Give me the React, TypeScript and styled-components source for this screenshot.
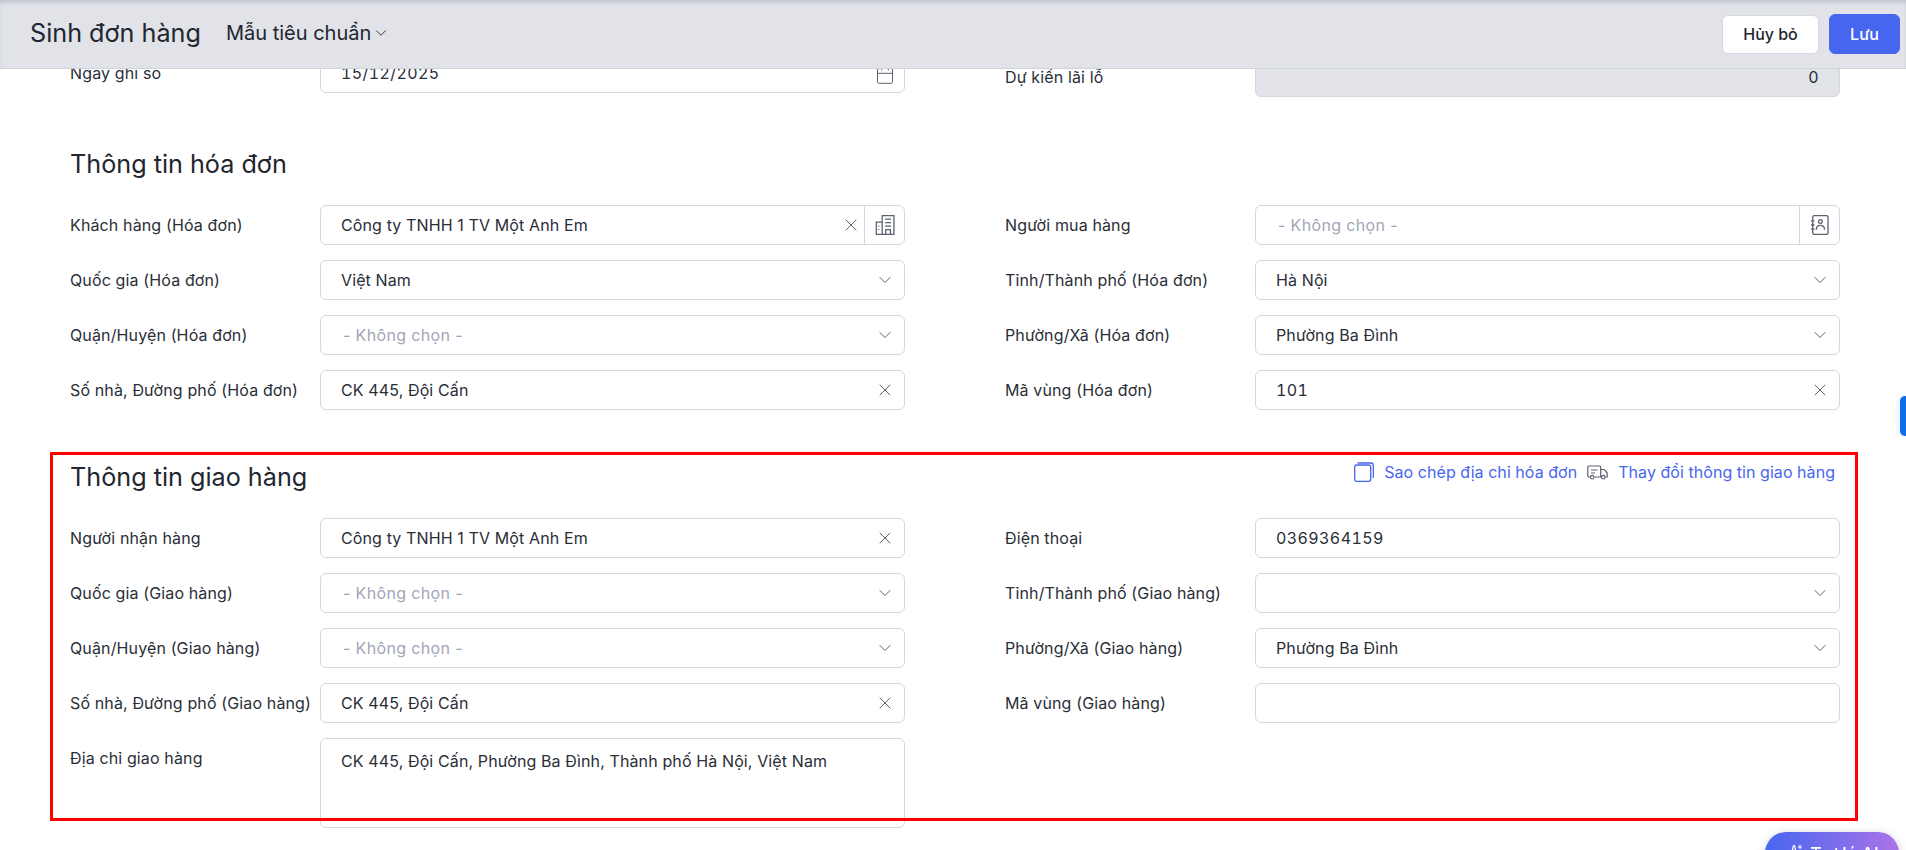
import React from 'react';
import styled, { createGlobalStyle } from 'styled-components';
import { ChevronDown, X, Calendar, Sparkles } from 'lucide-react';

const GlobalStyle = createGlobalStyle`
  html, body {
    margin: 0;
    height: 100%;
    overflow: hidden;
    background: #fff;
    font-family: Inter, "Noto Sans", sans-serif;
    color: #2a2e37;
  }
  * { box-sizing: border-box; }
`;

const BuildingIcon = () => (
  <svg width="20" height="20" viewBox="1.8 2 16.200 17" fill="none" stroke="currentColor" strokeWidth="1.1">
    <path d="M7.5 18.5V2.5h10v16z" />
    <path d="M7.5 8H2.5v10.5h5" />
    <path d="M10 5.500h5M10 8.500h5M10 11.500h5M10.500 18.500v-4h4v4M4.500 11v.8M4.500 14v.8" />
  </svg>
);

const ContactIcon = () => (
  <svg width="19" height="20" viewBox="2 1.500 15.500 17" fill="none" stroke="currentColor" strokeWidth="1.100">
    <rect x="4" y="2" width="13" height="16" rx="1.500" />
    <path d="M2.500 6.500h3M2.500 10h3M2.500 13.500h3" />
    <circle cx="10.500" cy="7" r="1.600" />
    <path d="M7 14c0-2.400 1.500-3.600 3.500-3.600S14 11.600 14 14" />
  </svg>
);

const CopyIcon = () => (
  <svg width="20" height="20" viewBox="0 0 20 20" fill="none" stroke="currentColor" strokeWidth="1.300">
    <rect x="0.700" y="3" width="16" height="16.300" rx="2" />
    <path d="M3.500 1h13.500a2.300 2.300 0 0 1 2.300 2.300V16" />
  </svg>
);

const TruckIcon = () => (
  <svg width="21" height="20" viewBox="0 0 21 20" fill="none" stroke="#5c6270" strokeWidth="1.200">
    <path d="M3 15H2a1.200 1.200 0 0 1-1.200-1.200V5.200A1.200 1.200 0 0 1 2 4h10.500a1.200 1.200 0 0 1 1.200 1.200V15H7.500" />
    <path d="M13.700 7.500h3.500l3 3.500v4h-1.700M14 15h.5" />
    <circle cx="5.200" cy="15.200" r="1.800" />
    <circle cx="16.300" cy="15.200" r="1.800" />
    <path d="M4 8h6.500M4 11h4" />
  </svg>
);

const Header = styled.header`
  position: fixed;
  top: 0;
  left: 0;
  right: 0;
  z-index: 10;
  height: 69px;
  display: flex;
  align-items: center;
  padding: 0 6px 0 30px;
  background: #e1e3e9;
  border-bottom: 1px solid #ced2da;
  box-shadow: inset 0 4px 4px -2px rgba(60, 64, 80, 0.22);
`;

const PageTitle = styled.h1`
  margin: 0 25px 2px 0;
  font-size: 25.200px;
  line-height: 30px;
  font-weight: 400;
  color: #22262e;
`;

const TemplatePicker = styled.div`
  display: flex;
  align-items: center;
  gap: 1px;
  font-size: 20px;
  color: #22262e;
  margin: 0 auto 2px 0;
`;

const HeaderButton = styled.button<{ $primary?: boolean }>`
  height: ${({ $primary }) => ($primary ? 40 : 39)}px;
  width: ${({ $primary }) => ($primary ? 71 : 97)}px;
  margin-left: ${({ $primary }) => ($primary ? 10 : 0)}px;
  border-radius: 6px;
  border: 1px solid ${({ $primary }) => ($primary ? '#4766f0' : '#d6d9e0')};
  background: ${({ $primary }) => ($primary ? '#4766f0' : '#fff')};
  color: ${({ $primary }) => ($primary ? '#fff' : '#22262e')};
  font-family: inherit;
  font-size: 16px;
  font-weight: 500;
`;

const Content = styled.main`
  padding: 53px 66px 0 70px;
`;

const FormGrid = styled.div`
  display: grid;
  grid-template-columns: 835px 835px;
  column-gap: 100px;
  row-gap: 15px;
`;

const Section = styled.section`
  margin-top: 52px;
`;

const SectionHead = styled.div`
  display: flex;
  justify-content: space-between;
  align-items: flex-start;
  margin-bottom: 26px;
`;

const SectionTitle = styled.h2`
  margin: 0;
  font-size: 25.200px;
  line-height: 30px;
  font-weight: 400;
  color: #22262e;
`;

const Actions = styled.div`
  display: flex;
  align-items: center;
  padding-right: 5px;
  color: #4766f0;
  font-size: 16px;
  line-height: 20px;
  letter-spacing: 0.05px;
`;

const ActionLink = styled.a`
  display: flex;
  align-items: center;
  gap: 10px;
  margin-left: 10px;
`;

const Field = styled.div<{ $offset?: number }>`
  display: flex;
  align-items: flex-start;
  margin-top: ${({ $offset }) => $offset ?? 0}px;
`;

const Label = styled.label`
  flex: 0 0 250px;
  font-size: 16px;
  line-height: 40px;
  letter-spacing: 0.13px;
  color: #2a2e37;
`;

const Control = styled.div<{ $disabled?: boolean; $tall?: boolean }>`
  flex: 1;
  height: ${({ $tall }) => ($tall ? 90 : 40)}px;
  display: flex;
  align-items: ${({ $tall }) => ($tall ? 'flex-start' : 'center')};
  border: 1px solid #d3d7df;
  border-radius: 6px;
  background: ${({ $disabled }) => ($disabled ? '#e1e3e9' : '#fff')};
  font-size: 16px;
  color: #2a2e37;
`;

const Value = styled.div<{ $right?: boolean; $tall?: boolean; $numeric?: boolean }>`
  flex: 1;
  padding: ${({ $tall }) => ($tall ? '11px 20px 0' : '0 20px')};
  line-height: 22px;
  text-align: ${({ $right }) => ($right ? 'right' : 'left')};
  letter-spacing: ${({ $numeric }) => ($numeric ? 0.4 : 0.12)}px;
  font-variant-numeric: ${({ $numeric }) => ($numeric ? 'tabular-nums' : 'normal')};
`;

const Placeholder = styled.div`
  flex: 1;
  padding-left: 22px;
  letter-spacing: 0.35px;
  color: #a1a6b6;
`;

const IconSlot = styled.span<{ $tight?: boolean; $nudge?: number }>`
  flex: 0 0 auto;
  display: flex;
  margin-top: ${({ $nudge }) => $nudge ?? 0}px;
  margin-right: ${({ $tight }) => ($tight ? 3 : 9)}px;
  color: #5c6270;
`;

const Addon = styled.span`
  flex: 0 0 40px;
  align-self: stretch;
  display: flex;
  align-items: center;
  justify-content: center;
  border-left: 1px solid #d3d7df;
  color: #5c6270;
`;

const Marker = styled.div`
  position: fixed;
  left: 50px;
  top: 452px;
  width: 1808px;
  height: 369px;
  border: 3px solid #fe0000;
  pointer-events: none;
  z-index: 5;
`;

const SideTab = styled.div`
  position: fixed;
  right: 0;
  top: 396px;
  width: 6px;
  height: 40px;
  border-radius: 5px 0 0 5px;
  background: #0f6fe8;
  box-shadow: 0 0 6px rgba(15, 111, 232, 0.2);
`;

const AssistantButton = styled.button`
  position: fixed;
  right: 7px;
  top: 832px;
  width: 134px;
  height: 42px;
  display: flex;
  align-items: center;
  justify-content: center;
  gap: 7px;
  border: 0;
  border-radius: 21px;
  background: linear-gradient(90deg, #4766f0, #ab74e8);
  color: #fff;
  font-family: inherit;
  font-size: 17.500px;
  font-weight: 500;
  box-shadow: 0 2px 10px rgba(60, 60, 120, 0.25);
`;

const Clear: React.FC<{ tight?: boolean }> = ({ tight }) => (
  <IconSlot $tight={tight}>
    <X size={20} strokeWidth={1.2} />
  </IconSlot>
);

const Caret = () => (
  <IconSlot>
    <ChevronDown size={20} strokeWidth={1.2} />
  </IconSlot>
);

type RowProps = {
  label: string;
  value?: string;
  placeholder?: boolean;
  numeric?: boolean;
  icon?: 'clear' | 'caret' | 'none';
};

const Row: React.FC<RowProps> = ({ label, value, placeholder, numeric, icon = 'caret' }) => (
  <Field>
    <Label>{label}</Label>
    <Control>
      {placeholder ? (
        <Placeholder>- Không chọn -</Placeholder>
      ) : (
        <Value $numeric={numeric}>{value}</Value>
      )}
      {icon === 'clear' && <Clear />}
      {icon === 'caret' && <Caret />}
    </Control>
  </Field>
);

export default function App() {
  return (
    <>
      <GlobalStyle />
      <Header>
        <PageTitle>Sinh đơn hàng</PageTitle>
        <TemplatePicker>
          Mẫu tiêu chuẩn
          <ChevronDown size={18} strokeWidth={1.2} />
        </TemplatePicker>
        <HeaderButton>Hủy bỏ</HeaderButton>
        <HeaderButton $primary>Lưu</HeaderButton>
      </Header>

      <Content>
        <FormGrid>
          <Field>
            <Label>Ngày ghi sổ</Label>
            <Control>
              <Value $numeric>15/12/2025</Value>
              <IconSlot $nudge={4}>
                <Calendar size={20} strokeWidth={1.2} />
              </IconSlot>
            </Control>
          </Field>
          <Field $offset={4}>
            <Label>Dự kiến lãi lỗ</Label>
            <Control $disabled>
              <Value $right $numeric>0</Value>
            </Control>
          </Field>
        </FormGrid>

        <Section>
          <SectionHead>
            <SectionTitle>Thông tin hóa đơn</SectionTitle>
          </SectionHead>
          <FormGrid>
            <Field>
              <Label>Khách hàng (Hóa đơn)</Label>
              <Control>
                <Value>Công ty TNHH 1 TV Một Anh Em</Value>
                <Clear tight />
                <Addon>
                  <BuildingIcon />
                </Addon>
              </Control>
            </Field>
            <Field>
              <Label>Người mua hàng</Label>
              <Control>
                <Placeholder>- Không chọn -</Placeholder>
                <Addon>
                  <ContactIcon />
                </Addon>
              </Control>
            </Field>
            <Row label="Quốc gia (Hóa đơn)" value="Việt Nam" />
            <Row label="Tỉnh/Thành phố (Hóa đơn)" value="Hà Nội" />
            <Row label="Quận/Huyện (Hóa đơn)" placeholder />
            <Row label="Phường/Xã (Hóa đơn)" value="Phường Ba Đình" />
            <Row label="Số nhà, Đường phố (Hóa đơn)" value="CK 445, Đội Cấn" icon="clear" />
            <Row label="Mã vùng (Hóa đơn)" value="101" numeric icon="clear" />
          </FormGrid>
        </Section>

        <Section>
          <SectionHead>
            <SectionTitle>Thông tin giao hàng</SectionTitle>
            <Actions>
              <ActionLink>
                <CopyIcon />
                Sao chép địa chỉ hóa đơn
              </ActionLink>
              <ActionLink>
                <TruckIcon />
                Thay đổi thông tin giao hàng
              </ActionLink>
            </Actions>
          </SectionHead>
          <FormGrid>
            <Row label="Người nhận hàng" value="Công ty TNHH 1 TV Một Anh Em" icon="clear" />
            <Row label="Điện thoại" value="0369364159" numeric icon="none" />
            <Row label="Quốc gia (Giao hàng)" placeholder />
            <Row label="Tỉnh/Thành phố (Giao hàng)" />
            <Row label="Quận/Huyện (Giao hàng)" placeholder />
            <Row label="Phường/Xã (Giao hàng)" value="Phường Ba Đình" />
            <Row label="Số nhà, Đường phố (Giao hàng)" value="CK 445, Đội Cấn" icon="clear" />
            <Row label="Mã vùng (Giao hàng)" icon="none" />
            <Field>
              <Label>Địa chỉ giao hàng</Label>
              <Control $tall>
                <Value $tall>CK 445, Đội Cấn, Phường Ba Đình, Thành phố Hà Nội, Việt Nam</Value>
              </Control>
            </Field>
          </FormGrid>
        </Section>
      </Content>

      <Marker />
      <SideTab />
      <AssistantButton>
        <Sparkles size={18} strokeWidth={1.6} />
        Trợ lý AI
      </AssistantButton>
    </>
  );
}
